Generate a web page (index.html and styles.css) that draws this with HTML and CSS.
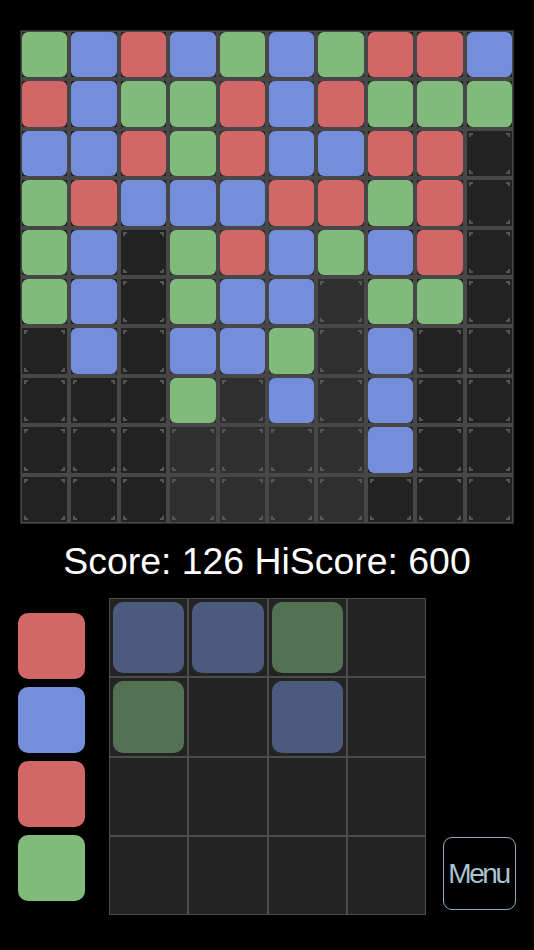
FILE: index.html
```html
<!DOCTYPE html>
<html lang="en">
<head>
  <meta charset="UTF-8" />
  <meta name="viewport" content="width=device-width, initial-scale=1.0"/>
  <title>Blocks</title>
  <link rel="stylesheet" href="styles.css">
</head>
<body>
  <div class="board" id="board"></div>

  <div class="score">Score: 126 HiScore: 600</div>

  <div class="bottom">
    <div class="queue">
      <div class="tile r"></div>
      <div class="tile b"></div>
      <div class="tile r"></div>
      <div class="tile g"></div>
    </div>

    <div class="piece" id="piece"></div>

    <button class="menu-btn">Menu</button>
  </div>

  <script>
    // board layout, one string per row (. = empty)
    const rows = [
      'GBRBGBGRRB',
      'RBGGRBRGGG',
      'BBRGRBBRR.',
      'GRBBBRRGR.',
      'GB.GRBGBR.',
      'GB.GBB.GG.',
      '.B.BBG.B..',
      '...G.B.B..',
      '.......B..',
      '..........'
    ];
    const piece = [
      'BBG.',
      'G.B.',
      '....',
      '....'
    ];

    const board = document.getElementById('board');
    rows.forEach(function (row) {
      for (let c = 0; c < row.length; c++) {
        const cell = document.createElement('div');
        cell.className = 'cell';
        if (c >= 3 && c <= 6) cell.classList.add('lit');
        const ch = row[c];
        if (ch === '.') {
          cell.classList.add('empty');
        } else {
          const tile = document.createElement('div');
          tile.className = 'tile ' + ch.toLowerCase();
          cell.appendChild(tile);
        }
        board.appendChild(cell);
      }
    });

    const pieceEl = document.getElementById('piece');
    piece.forEach(function (row) {
      for (let c = 0; c < row.length; c++) {
        const cell = document.createElement('div');
        cell.className = 'slot';
        const ch = row[c];
        if (ch !== '.') {
          const tile = document.createElement('div');
          tile.className = 'ghost ' + ch.toLowerCase();
          cell.appendChild(tile);
        }
        pieceEl.appendChild(cell);
      }
    });
  </script>
</body>
</html>
```

FILE: styles.css
```css
* {
  box-sizing: border-box;
  margin: 0;
  padding: 0;
}

body {
  background: #000;
  font-family: 'Liberation Sans', Arial, sans-serif;
  width: 534px;
  height: 950px;
  overflow: hidden;
}

.board {
  --mark: #555;
  margin: 30px 0 0 20px;
  width: 494px;
  height: 494px;
  background: #474747;
  border: 1px solid #2c2c2c;
  padding: 1px;
  display: grid;
  grid-template-columns: repeat(10, 1fr);
  grid-template-rows: repeat(10, 1fr);
  gap: 4px;
}

.cell {
  background: #222;
  border-radius: 1px;
}

.cell.lit {
  background-color: #2f2f2f;
}

.cell.empty {
  background-image:
    linear-gradient(var(--mark), var(--mark)),
    linear-gradient(var(--mark), var(--mark)),
    linear-gradient(var(--mark), var(--mark)),
    linear-gradient(var(--mark), var(--mark)),
    linear-gradient(var(--mark), var(--mark)),
    linear-gradient(var(--mark), var(--mark)),
    linear-gradient(var(--mark), var(--mark)),
    linear-gradient(var(--mark), var(--mark));
  background-repeat: no-repeat;
  background-size: 4px 2px, 2px 4px, 4px 2px, 2px 4px, 4px 2px, 2px 4px, 4px 2px, 2px 4px;
  background-position:
    left 2px top 2px, left 2px top 2px,
    right 2px top 2px, right 2px top 2px,
    left 2px bottom 2px, left 2px bottom 2px,
    right 2px bottom 2px, right 2px bottom 2px;
}

.tile {
  width: 100%;
  height: 100%;
  border-radius: 6px;
}

.g { background: #80bb7c; }
.b { background: #758edb; }
.r { background: #d16767; }

.score {
  height: 74px;
  line-height: 74px;
  text-align: center;
  color: #fff;
  font-size: 37.4px;
}

.bottom {
  display: flex;
  align-items: flex-start;
}

.queue {
  margin: 15px 0 0 18px;
  width: 67px;
  display: flex;
  flex-direction: column;
  gap: 8px;
}

.queue .tile {
  height: 66px;
  border-radius: 10px;
}

.piece {
  margin-left: 24px;
  width: 317px;
  height: 317px;
  background: #4c4c4c;
  padding: 1px;
  display: grid;
  grid-template-columns: repeat(4, 1fr);
  grid-template-rows: repeat(4, 1fr);
  gap: 2px;
}

.slot {
  background: #242424;
  padding: 3px;
}

.ghost {
  width: 100%;
  height: 100%;
  border-radius: 10px;
}

.ghost.b { background: #4b5a7d; }
.ghost.g { background: #537253; }

.menu-btn {
  align-self: flex-end;
  margin: 0 0 5px 17px;
  width: 73px;
  height: 73px;
  background: #000;
  border: 1.5px solid #8aafc1;
  border-radius: 9px;
  color: #a9c5d2;
  font-family: 'Liberation Sans', Arial, sans-serif;
  font-size: 28px;
  letter-spacing: -2.4px;
  padding-right: 2px;
  cursor: pointer;
}
```
